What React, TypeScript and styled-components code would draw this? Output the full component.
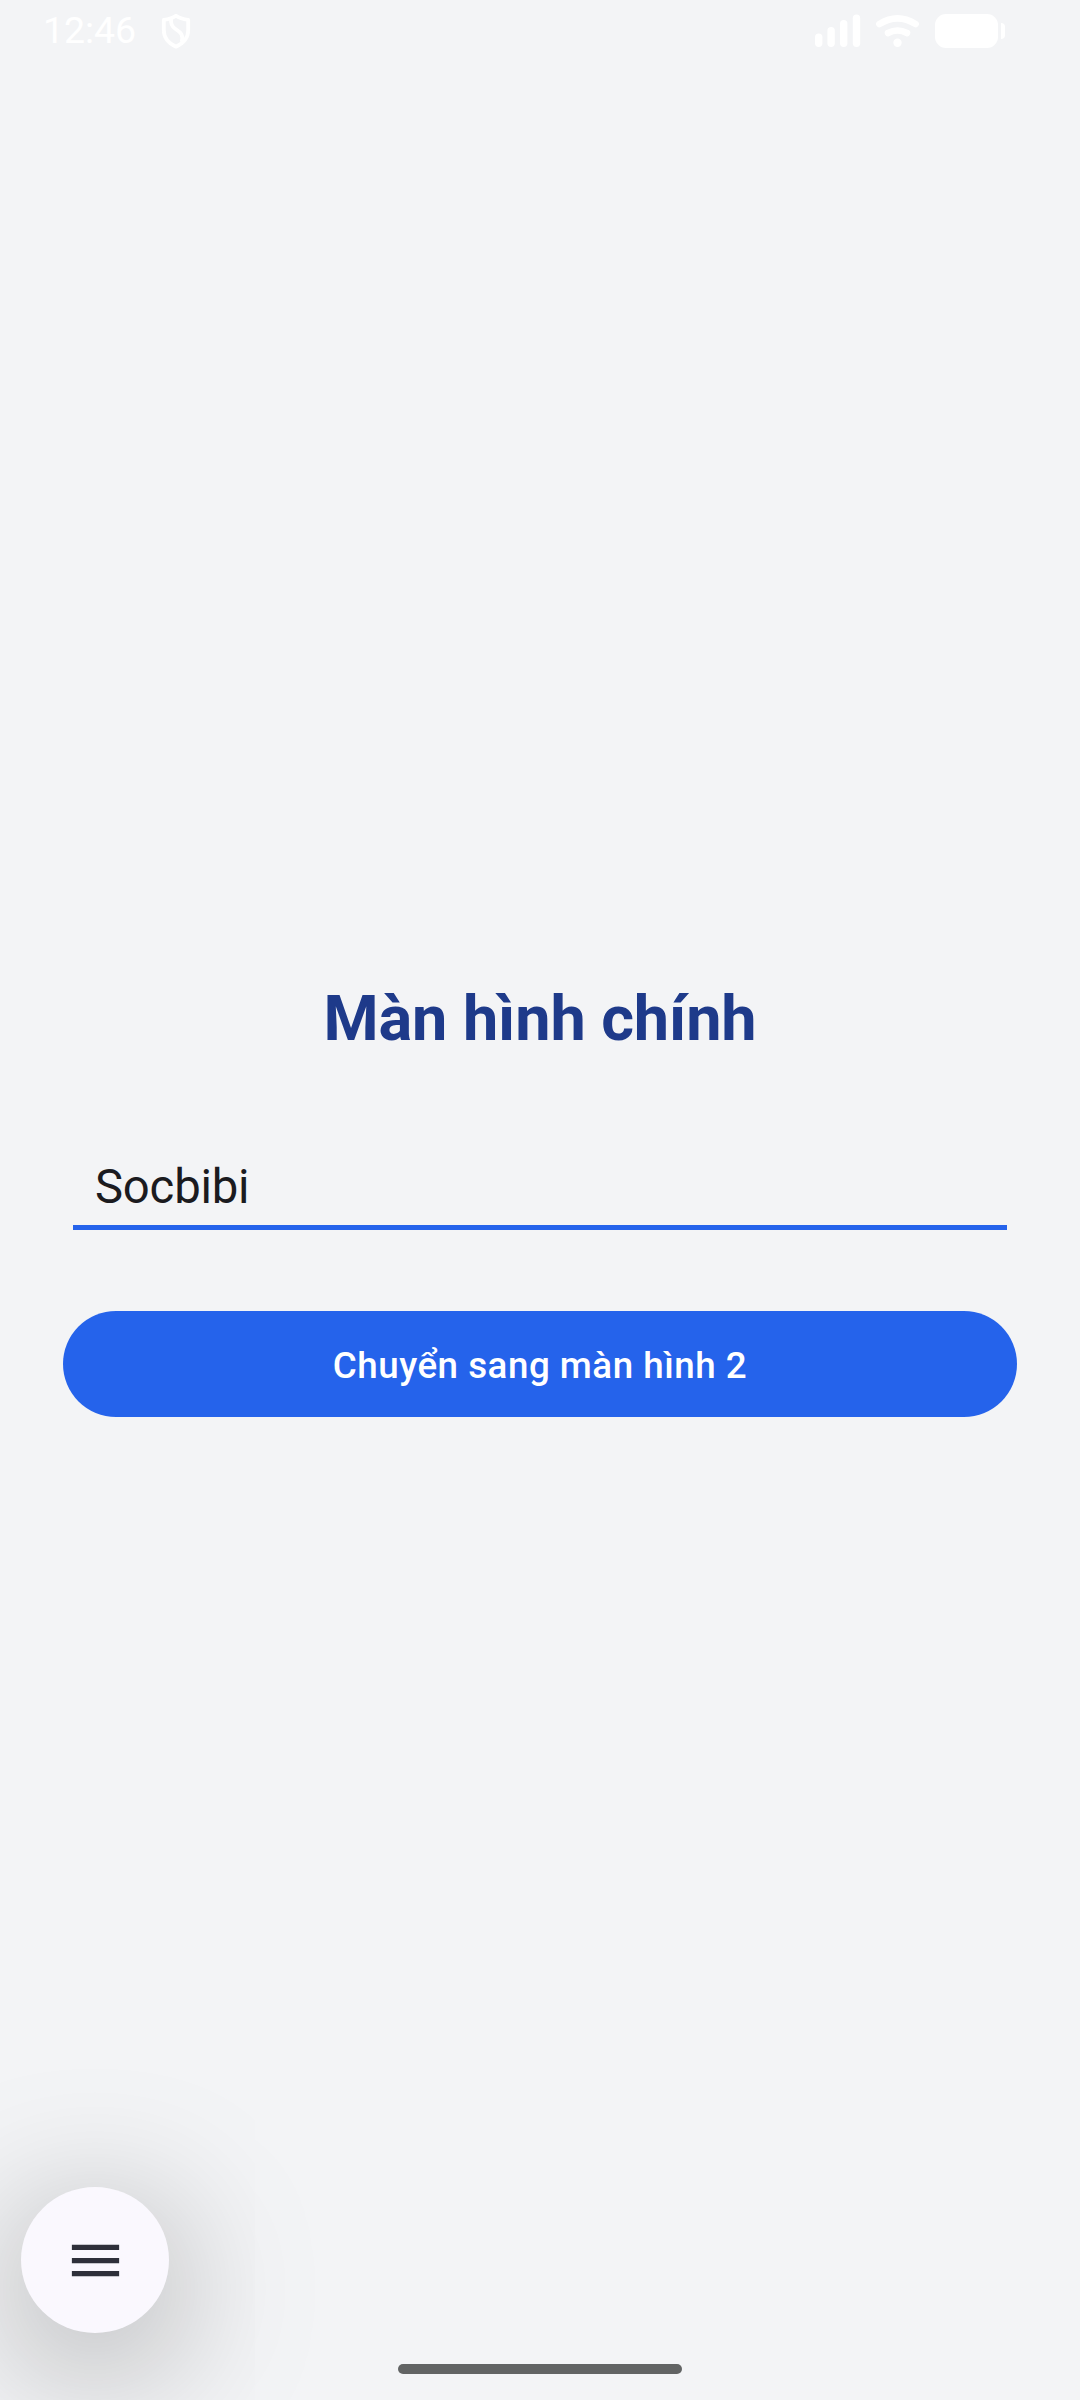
import React from "react";
import styled, { createGlobalStyle } from "styled-components";

const GlobalStyle = createGlobalStyle`
  body { margin: 0; background: #f3f4f6; }
  * { box-sizing: border-box; }
`;

const Screen = styled.div`
  position: relative;
  width: 1080px;
  height: 2400px;
  overflow: hidden;
  display: flex;
  flex-direction: column;
  background: #f3f4f6;
  font-family: Roboto, "Noto Sans", sans-serif;
`;

const StatusBar = styled.header`
  height: 62px;
  padding: 0 74px 0 43px;
  display: flex;
  align-items: center;
  justify-content: space-between;
  color: #fff;
`;

const StatusGroup = styled.div`
  height: 62px;
  display: flex;
  align-items: center;
`;

const Clock = styled.span`
  width: 118px;
  padding-bottom: 2px;
  font-size: 37.5px;
  line-height: 44px;
  letter-spacing: -0.1px;
`;

const Content = styled.main`
  flex: 1;
  display: flex;
  flex-direction: column;
  padding: 913px 63px 0;
`;

const Title = styled.h1`
  margin: 0;
  height: 88px;
  text-align: center;
  font-size: 63px;
  line-height: 88px;
  font-weight: 700;
  letter-spacing: -0.1px;
  color: #1e3a8a;
`;

const NameInput = styled.input`
  margin: 80px 10px 0;
  height: 87px;
  padding: 6px 22px 0;
  border: 0;
  border-bottom: 5px solid #2563eb;
  outline: none;
  background: transparent;
  color: #1b1b1f;
  font-family: inherit;
  font-size: 47.25px;
  letter-spacing: -0.2px;
`;

const NextButton = styled.button`
  margin-top: 81px;
  height: 106px;
  padding: 2px 0 0;
  border: 0;
  border-radius: 53px;
  background: #2563eb;
  color: #fff;
  font-family: inherit;
  font-size: 36.75px;
  font-weight: 500;
  letter-spacing: 0.5px;
`;

const MenuFab = styled.button`
  position: absolute;
  left: 21px;
  top: 2187px;
  width: 148px;
  height: 146px;
  padding: 0;
  border: 0;
  border-radius: 50%;
  display: grid;
  place-items: center;
  background: #faf8fe;
  box-shadow: 0 29px 148px rgba(0, 0, 0, 0.37);
`;

const HomeHandle = styled.div`
  align-self: center;
  width: 284px;
  height: 10px;
  margin-bottom: 26px;
  border-radius: 5px;
  background: #626464;
`;

const ShieldIcon = () => (
  <svg width="30" height="38" viewBox="0 0 30 38" fill="none" stroke="#fff" strokeWidth="3.8" strokeLinejoin="round">
    <path d="M15 3.8 C11.5 6.4 7 7.4 2.8 7.9 V18 C2.8 26 8 31.5 15 34.7 C22 31.5 27.2 26 27.2 18 V7.9 C23 7.4 18.5 6.4 15 3.8Z" />
    <path d="M10.3 6.8 C9.5 11 10 14 14.5 17 C20 20.5 22.5 23 20.7 30" />
  </svg>
);

const StatusIcons = () => (
  <svg width="192" height="38" viewBox="814 12 192 38" fill="#fff">
    <rect x="815" y="33.5" width="7.4" height="13.5" rx="3.7" />
    <rect x="827.4" y="27" width="7.4" height="20" rx="3.7" />
    <rect x="840" y="20" width="7.4" height="27" rx="3.7" />
    <rect x="852.8" y="14.5" width="7.4" height="32.5" rx="3.7" />
    <g fill="none" stroke="#fff" strokeWidth="6.6" strokeLinecap="round">
      <path d="M879.4 24 Q897.5 12.6 915.6 24" />
      <path d="M888 33 Q897.5 28 907 33" />
    </g>
    <circle cx="897.5" cy="42.7" r="4.2" />
    <rect x="935" y="14" width="63" height="34" rx="11" />
    <path d="M1001 23 Q1005 23 1005 27 V35 Q1005 39 1001 39Z" />
  </svg>
);

const MenuIcon = () => (
  <svg width="63" height="63" viewBox="0 0 24 24" fill="#2e303a">
    <path d="M3 18h18v-2H3v2zm0-5h18v-2H3v2zm0-7v2h18V6H3z" />
  </svg>
);

export default function App() {
  return (
    <>
      <GlobalStyle />
      <Screen>
        <StatusBar>
          <StatusGroup>
            <Clock>12:46</Clock>
            <ShieldIcon />
          </StatusGroup>
          <StatusGroup>
            <StatusIcons />
          </StatusGroup>
        </StatusBar>
        <Content>
          <Title>Màn hình chính</Title>
          <NameInput defaultValue="Socbibi" />
          <NextButton>Chuyển sang màn hình 2</NextButton>
        </Content>
        <HomeHandle />
        <MenuFab aria-label="Menu">
          <MenuIcon />
        </MenuFab>
      </Screen>
    </>
  );
}
